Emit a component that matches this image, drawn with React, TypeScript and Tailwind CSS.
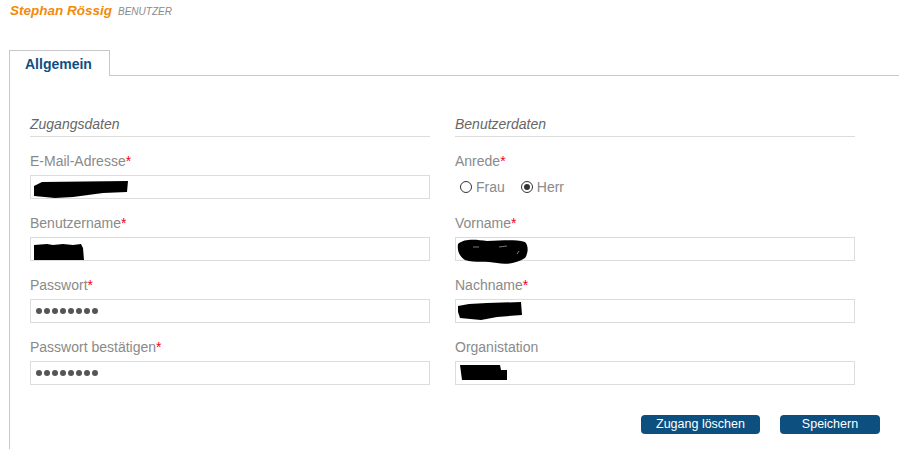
import React from "react";

const Req = () => <span className="text-[#f5001a]">*</span>;

function Label({ text, req }: { text: string; req?: boolean }) {
  return (
    <div className="h-[20px] leading-[22px] text-[14px] text-[#8a8a8a]">
      {text}
      {req && <Req />}
    </div>
  );
}

function Box({ children, className = "" }: { children?: React.ReactNode; className?: string }) {
  return (
    <div className={`mt-[5px] mb-[13px] h-[24px] border border-[#dcdcdc] bg-white flex ${className}`}>
      {children}
    </div>
  );
}

function Dots() {
  return (
    <div className="flex items-center gap-[2px] pl-[5px]">
      {[0, 1, 2, 3, 4, 5, 6, 7].map((i) => (
        <div key={i} className="w-[6px] h-[6px] rounded-full bg-[#555]" />
      ))}
    </div>
  );
}

function Radio({ checked }: { checked?: boolean }) {
  return (
    <div className="w-[12px] h-[12px] rounded-full border border-[#333] bg-white flex items-center justify-center">
      {checked && <div className="w-[6px] h-[6px] rounded-full bg-[#333]" />}
    </div>
  );
}

function Heading({ text }: { text: string }) {
  return (
    <div className="h-[23px] leading-[20px] text-[14px] italic text-[#666] border-b border-[#dcdcdc] mb-[13px]">
      {text}
    </div>
  );
}

export default function App() {
  return (
    <div className="w-[899px] h-[449px] overflow-hidden bg-white font-['Liberation_Sans',Arial,sans-serif]">
      <div className="h-[50px] pl-[10px] leading-[20px]">
        <span className="text-[13.5px] font-bold italic text-[#f28a0a]">Stephan Rössig</span>
        <span className="ml-[6px] text-[10px] italic text-[#8a8a8a] uppercase">Benutzer</span>
      </div>
      <div className="ml-[9px] flex h-[26px]">
        <div className="w-[101px] border-l border-t border-r border-[#c8c8c8] bg-white pl-[15px] leading-[26px] text-[14px] font-bold text-[#0e4f7f]">
          Allgemein
        </div>
        <div className="flex-1 border-b border-[#c8c8c8]" />
      </div>
      <div className="ml-[9px] h-[373px] border-l border-[#c8c8c8] pt-[38px] pl-[20px]">
        <div className="grid grid-cols-[400px_400px] gap-x-[25px]">
          <div>
            <Heading text="Zugangsdaten" />
            <Label text="E-Mail-Adresse" req />
            <Box className="pl-[2px] pt-[5px]">
              <svg width="96" height="18" viewBox="0 0 96 18">
                <path d="M1 5 L9 1 L95 0 L94 11 L70 12 L40 16 L22 17 L1 15 Z" fill="#000" />
              </svg>
            </Box>
            <Label text="Benutzername" req />
            <Box className="pl-[2px] pt-[5px]">
              <svg width="52" height="18" viewBox="0 0 52 18">
                <path d="M1 2 L14 1 L20 2 L30 1 L40 2 L48 1 L50 5 L51 17 L1 17 Z" fill="#000" />
              </svg>
            </Box>
            <Label text="Passwort" req />
            <Box className="items-center">
              <Dots />
            </Box>
            <Label text="Passwort bestätigen" req />
            <Box className="items-center">
              <Dots />
            </Box>
          </div>
          <div>
            <Heading text="Benutzerdaten" />
            <Label text="Anrede" req />
            <div className="mt-[5px] mb-[13px] h-[24px] flex items-center pl-[5px] text-[14px] text-[#8a8a8a]">
              <Radio />
              <span className="ml-[4px]">Frau</span>
              <div className="ml-[16px]">
                <Radio checked />
              </div>
              <span className="ml-[4px]">Herr</span>
            </div>
            <Label text="Vorname" req />
            <Box className="pl-[1px]">
              <svg width="72" height="27" viewBox="0 0 72 27">
                <path
                  d="M1 6 C8 0 20 2 30 3 C45 3 55 1 68 4 C72 8 71 16 68 20 C60 25 50 27 40 25 C30 23 18 25 8 22 C2 18 0 12 1 6 Z"
                  fill="#000"
                />
                <path d="M16 9 L22 9 M42 9 L50 8 M62 13 L60 16" stroke="#fff" strokeWidth="0.6" opacity="0.8" />
              </svg>
            </Box>
            <Label text="Nachname" req />
            <Box className="pl-[1px] pt-[2px]">
              <svg width="66" height="20" viewBox="0 0 66 20">
                <path d="M1 4 L12 2 L30 1 L64 0 L65 13 L40 15 L24 18 L3 16 L1 10 Z" fill="#000" />
              </svg>
            </Box>
            <Label text="Organistation" />
            <Box className="pl-[4px] pt-[2px]">
              <svg width="48" height="17" viewBox="0 0 48 17">
                <path d="M0 1 L40 1 L41 6 L47 6 L47 16 L2 16 Z" fill="#000" />
              </svg>
            </Box>
          </div>
        </div>
        <div className="mt-[17px] flex justify-end pr-[19px] gap-[20px]">
          <button className="w-[119px] h-[19px] rounded-[4px] bg-[#0d4f7e] text-white text-[12.5px] leading-[19px]">
            Zugang löschen
          </button>
          <button className="w-[100px] h-[19px] rounded-[4px] bg-[#0d4f7e] text-white text-[12.5px] leading-[19px]">
            Speichern
          </button>
        </div>
      </div>
    </div>
  );
}
